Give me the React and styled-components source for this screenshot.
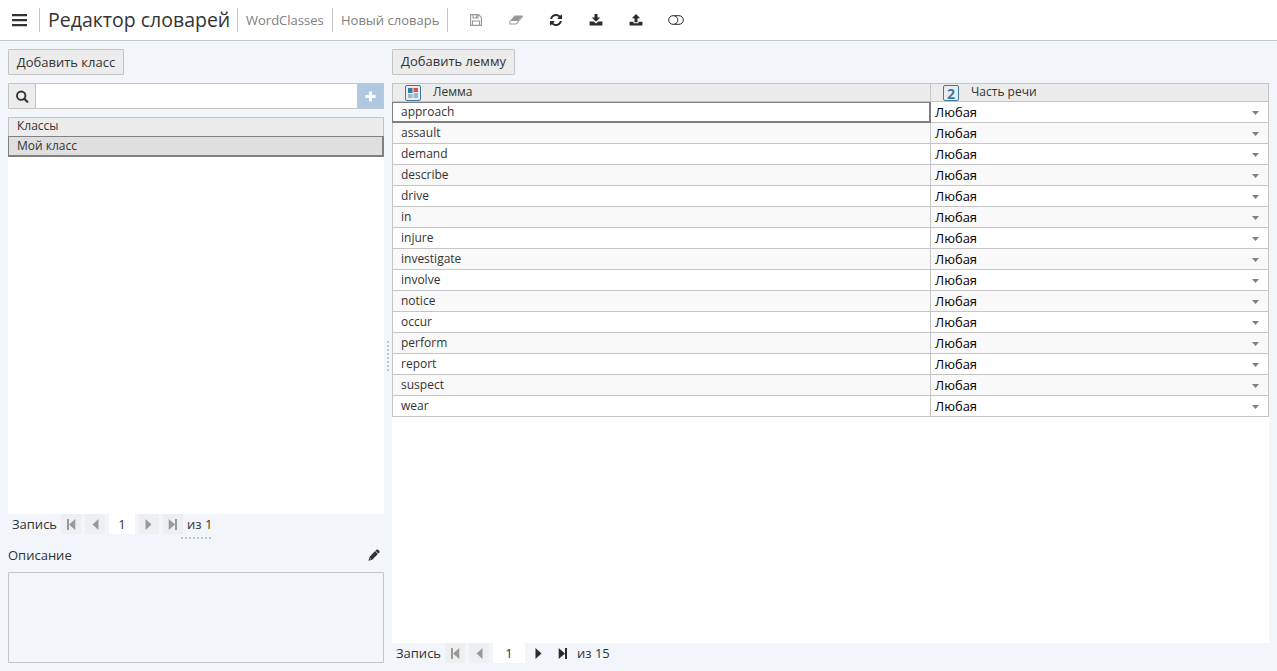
import React, { useState } from 'react';
import styled, { createGlobalStyle, css } from 'styled-components';

const lemmas = [
    'approach', 'assault', 'demand', 'describe', 'drive', 'in', 'injure', 'investigate',
    'involve', 'notice', 'occur', 'perform', 'report', 'suspect', 'wear',
];

const App = () => {
    const [selected, setSelected] = useState(0);
    const [search, setSearch] = useState('');
    const [description, setDescription] = useState('');

    return (
        <Page>
            <GlobalStyle />
            <Header>
                <MenuButton><MenuIcon /></MenuButton>
                <Title>Редактор словарей</Title>
                <Crumb $width={95}>WordClasses</Crumb>
                <Crumb $width={115}>Новый словарь</Crumb>
                <Tools>
                    <ToolButton disabled><SaveIcon /></ToolButton>
                    <ToolButton disabled><EraserIcon /></ToolButton>
                    <ToolButton><RefreshIcon /></ToolButton>
                    <ToolButton><DownloadIcon /></ToolButton>
                    <ToolButton><UploadIcon /></ToolButton>
                    <ToolButton><ToggleIcon /></ToolButton>
                </Tools>
            </Header>
            <Body>
                <Sidebar>
                    <AddButton $width={116}>Добавить класс</AddButton>
                    <SearchBar>
                        <SearchLabel><SearchIcon /></SearchLabel>
                        <SearchInput value={search} onChange={(e) => setSearch(e.target.value)} />
                        <PlusButton><PlusIcon /></PlusButton>
                    </SearchBar>
                    <ClassList>
                        <ClassHeader>Классы</ClassHeader>
                        <ClassRow>Мой класс</ClassRow>
                    </ClassList>
                    <Pager total={1} inputWidth={26} />
                    <HorizontalGrip />
                    <DescriptionHead>
                        <span>Описание</span>
                        <PencilIcon />
                    </DescriptionHead>
                    <Description value={description} onChange={(e) => setDescription(e.target.value)} />
                </Sidebar>
                <Splitter><VerticalGrip /></Splitter>
                <Main>
                    <AddButton $width={123} $lift>Добавить лемму</AddButton>
                    <GridArea>
                        <GridHeader>
                            <HeadCell><TypeIcon />Лемма</HeadCell>
                            <HeadCell><NumberBadge>2</NumberBadge>Часть речи</HeadCell>
                        </GridHeader>
                        {lemmas.map((lemma, idx) => (
                            <GridRow key={lemma} $odd={idx % 2 === 1}>
                                <LemmaCell $selected={idx === selected} onClick={() => setSelected(idx)}>{lemma}</LemmaCell>
                                <PartCell>Любая<CaretIcon /></PartCell>
                            </GridRow>
                        ))}
                    </GridArea>
                    <Pager total={15} inputWidth={32} hasNext />
                </Main>
            </Body>
        </Page>
    );
}

const Pager = ({ total, inputWidth, hasNext }) => (
    <PagerRow>
        <PagerLabel>Запись</PagerLabel>
        <PagerButton disabled><FirstIcon /></PagerButton>
        <PagerButton disabled><PrevIcon /></PagerButton>
        <PagerValue $width={inputWidth}>1</PagerValue>
        <PagerButton disabled={!hasNext}><PrevIcon flip /></PagerButton>
        <PagerButton disabled={!hasNext}><FirstIcon flip /></PagerButton>
        <span>{`из ${total}`}</span>
    </PagerRow>
)

const MenuIcon = () => (
    <svg width="16" height="14" viewBox="0 0 16 14" fill="#333">
        <path d="M0 1h15v2.200H0zM0 6h15v2.200H0zM0 11h15v2.200H0z" />
    </svg>
)

const SaveIcon = () => (
    <svg width="12" height="12" viewBox="0 0 12 12" fill="none" stroke="currentColor" strokeWidth="1.100">
        <path d="M.6 .6h8l2.800 2.800v8H.6zM2.500 11.500v-4.500h7v4.500M3 .5v3.500h5V.5M6.500 1v2.500" />
    </svg>
)

const EraserIcon = () => (
    <svg width="15" height="10" viewBox="0 0 15 10">
        <path d="M5.500 .5H14L9.300 6H.9z" fill="currentColor" />
        <path d="M1 6L.7 9h6.800l2-3M7.500 9L13.900 1" fill="none" stroke="currentColor" strokeWidth="1" />
    </svg>
)

const RefreshIcon = () => (
    <svg width="12" height="12" viewBox="0 0 1536 1536" fill="currentColor">
        <path d="M1511 928q0 5-1 7-64 268-268 434.500T764 1536q-146 0-282.500-55T238 1324l-129 129q-19 19-45 19t-45-19-19-45V960q0-26 19-45t45-19h448q26 0 45 19t19 45-19 45l-137 137q71 66 161 102t187 36q134 0 250-65t186-179q11-17 53-117 8-23 30-23h192q13 0 22.500 9.500t9.500 22.500zm25-800v448q0 26-19 45t-45 19h-448q-26 0-45-19t-19-45 19-45l138-138Q969 256 768 256q-134 0-250 65T332 500q-11 17-53 117-8 23-30 23H50q-13 0-22.500-9.500T18 608v-7q65-268 270-434.500T768 0q146 0 284 55.500T1297 212l130-129q19-19 45-19t45 19 19 45z" />
    </svg>
)

const DownloadIcon = () => (
    <svg width="14" height="12" viewBox="0 0 14 12" fill="currentColor">
        <path d="M5.500 0h3v3.500h2.700L7 7.700 2.800 3.500h2.700zM.6 7.500h4L7 9.500l2.400-2h4v3.900H.6z" />
    </svg>
)

const UploadIcon = () => (
    <svg width="14" height="12" viewBox="0 0 14 12" fill="currentColor">
        <path d="M7 0l4.200 4.300H8.500v4h-3v-4H2.800zM.6 7.700h3.900v1.500h5V7.700h3.900v3.900H.6z" />
    </svg>
)

const ToggleIcon = () => (
    <svg width="16" height="10" viewBox="0 0 16 10" fill="none" stroke="currentColor" strokeWidth="1">
        <rect x=".7" y=".7" width="14.600" height="8.600" rx="4.300" />
        <path d="M6.500 1c4.500 1 4.500 7 0 8" />
    </svg>
)

const SearchIcon = () => (
    <svg width="13" height="13" viewBox="0 0 13 13" fill="none" stroke="#333">
        <circle cx="5.200" cy="5.700" r="4.200" strokeWidth="1.900" />
        <path d="M8.300 8.800l3 3" strokeWidth="2.200" strokeLinecap="round" />
    </svg>
)

const PlusIcon = () => (
    <svg width="11" height="11" viewBox="0 0 11 11" fill="#fff">
        <path d="M4 .5h3V4h3.500v3H7v3.500H4V7H.5V4H4z" />
    </svg>
)

const PencilIcon = () => (
    <svg width="12" height="12" viewBox="0 0 12 12" fill="#333">
        <path d="M8.400 .8Q9.300 0 10.200 .8l1.100 1.100q.8.900 0 1.700l-1 1-2.900-2.900zM7 2.100l2.900 2.900-5.700 5.700-3.700 1 1-3.800z" />
        <path d="M1.600 9L3 10.400" stroke="#f2f5fa" strokeWidth=".8" />
    </svg>
)

const TypeIcon = () => (
    <svg width="16" height="16" viewBox="0 0 16 16">
        <rect x=".5" y=".5" width="15" height="15" rx="1.500" fill="#ececec" stroke="#3a7aa8" />
        <path d="M3 3h4.500v5H3z" fill="#3a7aa8" />
        <path d="M8.500 3H13v4H8.500z" fill="#e0523f" />
        <path d="M3 9h4.500v4H3zM8.500 8H13v5H8.500z" fill="#9fb8cb" />
    </svg>
)

const CaretIcon = () => (
    <CaretSvg width="7" height="4" viewBox="0 0 7 4" fill="#808080">
        <path d="M0 0h7L3.500 4z" />
    </CaretSvg>
)

const FirstIcon = ({ flip }) => (
    <PagerSvg width="10" height="11" viewBox="0 0 10 11" $flip={flip}>
        <path d="M1 0h2v11H1zM9.300 0v11L3 5.500z" />
    </PagerSvg>
)

const PrevIcon = ({ flip }) => (
    <PagerSvg width="10" height="11" viewBox="0 0 10 11" $flip={flip}>
        <path d="M8.500 0v11L2.500 5.500z" />
    </PagerSvg>
)

export default App;

const GlobalStyle = createGlobalStyle`
    * {
        box-sizing: border-box;
    }

    body {
        margin: 0;
        background-color: #f2f5fa;
        color: #333;
        font-family: "Open Sans", "Noto Sans", sans-serif;
        font-size: 13px;
        overflow: hidden;
    }

    button, input, textarea {
        font: inherit;
        color: inherit;
        padding: 0;
    }

    svg {
        display: block;
        flex: none;
    }
`

const Page = styled.div`
    display: flex;
    flex-direction: column;
    height: 100vh;
`

const Header = styled.header`
    display: flex;
    align-items: center;
    flex: none;
    height: 41px;
    background-color: #fff;
    border-bottom: 1px solid #c5c5c5;
`

const MenuButton = styled.button`
    display: flex;
    align-items: center;
    width: 40px;
    height: 24px;
    padding-left: 12px;
    border: 0;
    border-right: 1px solid #c5c5c5;
    background: none;
`

const Title = styled.h1`
    width: 198px;
    height: 24px;
    margin: 0;
    padding-left: 8px;
    border-right: 1px solid #c5c5c5;
    font-size: 19.500px;
    font-weight: 400;
    line-height: 23px;
    white-space: nowrap;
`

const Crumb = styled.div`
    width: ${({ $width }) => $width}px;
    height: 24px;
    padding-left: 8px;
    border-right: 1px solid #c5c5c5;
    color: #808080;
    line-height: 24px;
    white-space: nowrap;
`

const Tools = styled.div`
    display: flex;
    padding-left: 8px;
`

const ToolButton = styled.button`
    display: flex;
    align-items: center;
    justify-content: center;
    width: 40px;
    height: 40px;
    border: 0;
    background: none;
    color: #2b2b2b;

    &:disabled {
        color: #999;
    }
`

const Body = styled.div`
    display: flex;
    flex: 1;
    min-height: 0;
    padding: 8px;
`

const Sidebar = styled.aside`
    display: flex;
    flex-direction: column;
    width: 376px;
`

const AddButton = styled.button`
    flex: none;
    width: ${({ $width }) => $width}px;
    height: 26px;
    margin-bottom: 8px;
    padding-bottom: ${({ $lift }) => $lift ? 2 : 0}px;
    border: 1px solid #c5c5c5;
    border-radius: 1px;
    background-color: #ececec;
    line-height: 22px;
    white-space: nowrap;
`

const SearchBar = styled.div`
    display: flex;
    flex: none;
    height: 26px;
    margin-bottom: 8px;
`

const SearchLabel = styled.div`
    display: flex;
    align-items: center;
    justify-content: center;
    width: 28px;
    border: 1px solid #c5c5c5;
    border-radius: 1px 0 0 1px;
    background-color: #ececec;
`

const SearchInput = styled.input`
    flex: 1;
    min-width: 0;
    padding: 0 6px;
    border: 1px solid #c5c5c5;
    border-left: 0;
    border-right: 0;
    outline: 0;
    background-color: #fff;
`

const PlusButton = styled.button`
    display: flex;
    align-items: center;
    justify-content: center;
    width: 27px;
    border: 1px solid #b9c9dc;
    background-color: #b0c7e0;
`

const ClassList = styled.div`
    flex: none;
    height: 397px;
    background-color: #fff;
    font-size: 12px;
`

const ClassHeader = styled.div`
    height: 19px;
    padding-left: 8px;
    border: 1px solid #c5c5c5;
    border-bottom: 0;
    background-color: #ececec;
    line-height: 16px;
`

const ClassRow = styled.div`
    height: 21px;
    padding-left: 8px;
    border: 1px solid #808080;
    border-right-width: 2px;
    border-bottom-width: 2px;
    background-color: #dfdfdf;
    line-height: 18px;
`

const PagerRow = styled.div`
    display: flex;
    flex: none;
    gap: 4px;
    height: 20px;
    padding-left: 4px;
    line-height: 20px;
    white-space: nowrap;
`

const PagerLabel = styled.span`
    width: 45px;
`

const PagerButton = styled.button`
    display: flex;
    align-items: center;
    justify-content: center;
    width: 20px;
    border: 0;
    background: none;
    color: #2b2b2b;

    &:disabled {
        background-color: #eeeff1;
        color: #999;
    }
`

const PagerSvg = styled.svg`
    fill: currentColor;
    ${({ $flip }) => $flip && css`transform: scaleX(-1);`}
`

const PagerValue = styled.div`
    width: ${({ $width }) => $width}px;
    background-color: #fff;
    text-align: center;
`

const HorizontalGrip = styled.div`
    flex: none;
    width: 30px;
    height: 2px;
    margin: 3px auto 0 173px;
    background: repeating-linear-gradient(90deg, #c5c5c5 0 2px, transparent 2px 4px);
`

const DescriptionHead = styled.div`
    display: flex;
    align-items: center;
    justify-content: space-between;
    flex: none;
    height: 33px;
    padding: 0 4px 2px 0;
`

const Description = styled.textarea`
    flex: 1;
    min-height: 0;
    border: 1px solid #c5c5c5;
    border-radius: 1px;
    outline: 0;
    background: none;
    resize: none;
`

const Splitter = styled.div`
    display: flex;
    flex: none;
    width: 8px;
    padding: 292px 0 0 3px;
`

const VerticalGrip = styled.div`
    width: 2px;
    height: 30px;
    background: repeating-linear-gradient(#c5c5c5 0 2px, transparent 2px 4px);
`

const Main = styled.main`
    display: flex;
    flex: 1;
    flex-direction: column;
    min-width: 0;
`

const GridArea = styled.div`
    flex: 1;
    min-height: 0;
    background-color: #fff;
`

const rowColumns = css`
    display: grid;
    grid-template-columns: 539px 1fr;
`

const GridHeader = styled.div`
    ${rowColumns}
    height: 19px;
    border-top: 1px solid #c5c5c5;
    background-color: #ececec;
    font-size: 12px;
`

const HeadCell = styled.div`
    display: flex;
    align-items: flex-start;
    gap: 12px;
    height: 18px;
    padding: 1px 0 0 12px;
    border-right: 1px solid #c5c5c5;
    border-bottom: 1px solid #c5c5c5;
    line-height: 14px;

    &:first-child {
        border-left: 1px solid #c5c5c5;
    }
`

const NumberBadge = styled.span`
    width: 16px;
    height: 16px;
    border: 1px solid #3a7aa8;
    border-radius: 2px;
    color: #3a7aa8;
    font: bold 14px/15px "Open Sans", sans-serif;
    text-align: center;
`

const GridRow = styled.div`
    ${rowColumns}
    height: 21px;
    background-color: ${({ $odd }) => $odd ? '#f9f9f9' : '#fff'};
`

const LemmaCell = styled.div`
    padding-left: 8px;
    border: 0 solid #c5c5c5;
    border-width: 0 1px 1px 1px;
    font-size: 12px;
    line-height: 19px;

    ${({ $selected }) => $selected && css`
        border-color: #808080;
        border-width: 1px 2px 2px 1px;
        line-height: 17px;
    `}
`

const PartCell = styled.div`
    display: flex;
    justify-content: space-between;
    padding: 0 9px 0 4px;
    border-right: 1px solid #c5c5c5;
    border-bottom: 1px solid #c5c5c5;
    color: #000;
    line-height: 20px;
`

const CaretSvg = styled.svg`
    margin-top: 9px;
`
